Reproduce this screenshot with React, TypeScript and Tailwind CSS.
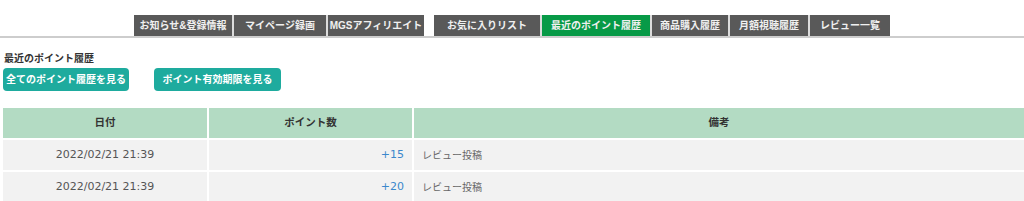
// Point history page: tab bar, section header with two buttons, history table
const leftTabs = [
  { label: "お知らせ&登録情報", width: "w-[98px]" },
  { label: "マイページ録画", width: "w-[92px]" },
  { label: "MGSアフィリエイト", width: "w-[96px]" },
];

const rightTabs = [
  { label: "お気に入りリスト", width: "w-[106px]", active: false },
  { label: "最近のポイント履歴", width: "w-[108px]", active: true },
  { label: "商品購入履歴", width: "w-[76px]", active: false },
  { label: "月額視聴履歴", width: "w-[78px]", active: false },
  { label: "レビュー一覧", width: "w-[80px]", active: false },
];

const history = [
  { date: "2022/02/21 21:39", points: "+15", note: "レビュー投稿" },
  { date: "2022/02/21 21:39", points: "+20", note: "レビュー投稿" },
];

function Tab({ label, width, active }: { label: string; width: string; active?: boolean }) {
  return (
    <div
      className={`${width} h-[21px] flex items-center justify-center whitespace-nowrap text-[10px] font-bold text-[#f0f0f0] ${
        active ? "bg-[#079a47]" : "bg-[#595959]"
      }`}
    >
      {label}
    </div>
  );
}

export default function App() {
  return (
    <div className="w-[1024px] h-[201px] overflow-hidden bg-white font-['Liberation_Sans','Noto_Sans_CJK_JP',sans-serif]">
      {/* Tab bar */}
      <div className="flex justify-center gap-[10px] pt-[15px] border-b-2 border-[#cdcdcd]">
        <div className="flex gap-[2px] bg-[#dcdcdc]">
          {leftTabs.map((t) => (
            <Tab key={t.label} label={t.label} width={t.width} />
          ))}
        </div>
        <div className="flex gap-[2px] bg-[#dcdcdc]">
          {rightTabs.map((t) => (
            <Tab key={t.label} label={t.label} width={t.width} active={t.active} />
          ))}
        </div>
      </div>

      {/* Section header */}
      <div className="mt-[14px] pl-[4px] text-[10px] leading-[14px] font-bold text-[#333]">
        最近のポイント履歴
      </div>
      <div className="mt-[2px] pl-[3px] flex gap-[25px]">
        <button className="w-[126px] h-[23px] rounded-[4px] bg-[#1eab9e] text-white text-[10px] font-bold flex items-center justify-center whitespace-nowrap">
          全てのポイント履歴を見る
        </button>
        <button className="w-[127px] h-[23px] rounded-[4px] bg-[#1eab9e] text-white text-[10px] font-bold flex items-center justify-center whitespace-nowrap">
          ポイント有効期限を見る
        </button>
      </div>

      {/* History table */}
      <div className="mt-[17px] ml-[3px] grid grid-cols-[204px_203px_1fr] gap-[2px] font-['DejaVu_Sans','Noto_Sans_CJK_JP',sans-serif]">
        <div className="h-[30px] bg-[#b3dbc3] flex items-center justify-center text-[10.5px] font-bold text-[#333]">日付</div>
        <div className="h-[30px] bg-[#b3dbc3] flex items-center justify-center text-[10.5px] font-bold text-[#333]">ポイント数</div>
        <div className="h-[30px] bg-[#b3dbc3] flex items-center justify-center text-[10.5px] font-bold text-[#333]">備考</div>
        {history.map((row, i) => (
          <div key={i} className="contents">
            <div className="h-[30px] bg-[#f2f2f2] flex items-center justify-center text-[11px] text-[#555]">{row.date}</div>
            <div className="h-[30px] bg-[#f2f2f2] flex items-center justify-end pr-[8px] text-[11px] text-[#3b88cc]">{row.points}</div>
            <div className="h-[30px] bg-[#f2f2f2] flex items-center pl-[8px] text-[10px] text-[#666]">{row.note}</div>
          </div>
        ))}
      </div>
    </div>
  );
}
